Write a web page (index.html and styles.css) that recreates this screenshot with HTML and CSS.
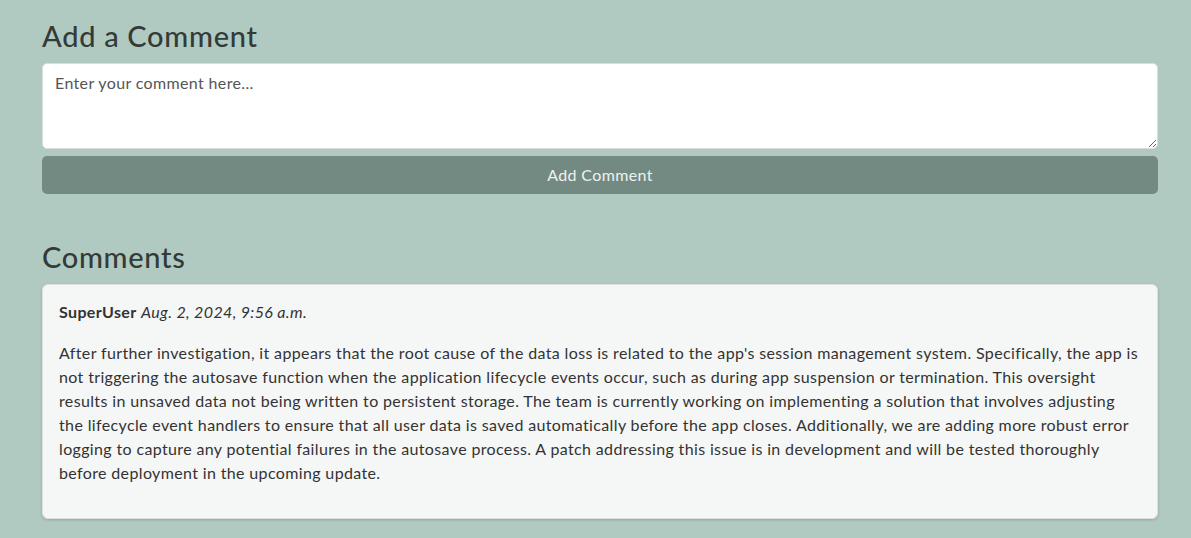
FILE: index.html
```html
<!DOCTYPE html>
<html lang="en">
<head>
<meta charset="utf-8">
<title>Comments</title>
<link rel="stylesheet" href="styles.css">
</head>
<body>
<main class="page">
  <section class="add-section">
    <h3 class="title">Add a Comment</h3>
    <form class="comment-form">
      <textarea class="comment-input" placeholder="Enter your comment here..."></textarea>
      <button type="button" class="submit-btn">Add Comment</button>
    </form>
  </section>
  <section class="list-section">
    <h3 class="title">Comments</h3>
    <div class="comment-card">
      <p class="meta"><strong class="author">SuperUser</strong> <em class="date">Aug. 2, 2024, 9:56 a.m.</em></p>
      <p class="body">After further investigation, it appears that the root cause of the data loss is related to the app's session management system. Specifically, the app is not triggering the autosave function when the application lifecycle events occur, such as during app suspension or termination. This oversight results in unsaved data not being written to persistent storage. The team is currently working on implementing a solution that involves adjusting the lifecycle event handlers to ensure that all user data is saved automatically before the app closes. Additionally, we are adding more robust error logging to capture any potential failures in the autosave process. A patch addressing this issue is in development and will be tested thoroughly before deployment in the upcoming update.</p>
    </div>
  </section>
</main>
</body>
</html>
```

FILE: styles.css
```css
html, body {
  margin: 0;
  padding: 0;
}
body {
  background: #b0cac1;
  font-family: "Lato", "Open Sans", sans-serif;
  color: #333;
  font-size: 16px;
  line-height: 1.5;
  letter-spacing: 0.36px;
}
.page {
  padding: 19px 33px 20px 42px;
}
.title {
  margin: 0 0 9px 0;
  font-size: 29px;
  font-weight: 500;
  line-height: 1.2;
  letter-spacing: 0.7px;
  color: #343a37;
}
.comment-form {
  display: flex;
  flex-direction: column;
  gap: 7px;
}
.comment-input {
  box-sizing: border-box;
  height: 86px;
  width: 100%;
  padding: 7px 12px;
  border: 1px solid #dcdcdc;
  border-radius: 5px;
  background: #fff;
  font-family: inherit;
  font-size: 16px;
  line-height: 1.5;
  letter-spacing: inherit;
  color: #333;
  resize: vertical;
}
.comment-input::placeholder {
  color: #555;
}
.submit-btn {
  height: 38px;
  border: none;
  border-radius: 5px;
  background: #738a82;
  color: #eef2ef;
  font-family: inherit;
  font-size: 16px;
  letter-spacing: inherit;
}
.list-section {
  margin-top: 46px;
}
.comment-card {
  background: #f5f7f6;
  border: 1px solid #dde2df;
  border-radius: 6px;
  box-shadow: 0 1px 3px rgba(0,0,0,0.18);
  padding: 15px 16px 33px 16px;
}
.meta {
  margin: 0 0 17px 0;
}
.author {
  font-weight: 700;
}
.body {
  margin: 0;
}
```
